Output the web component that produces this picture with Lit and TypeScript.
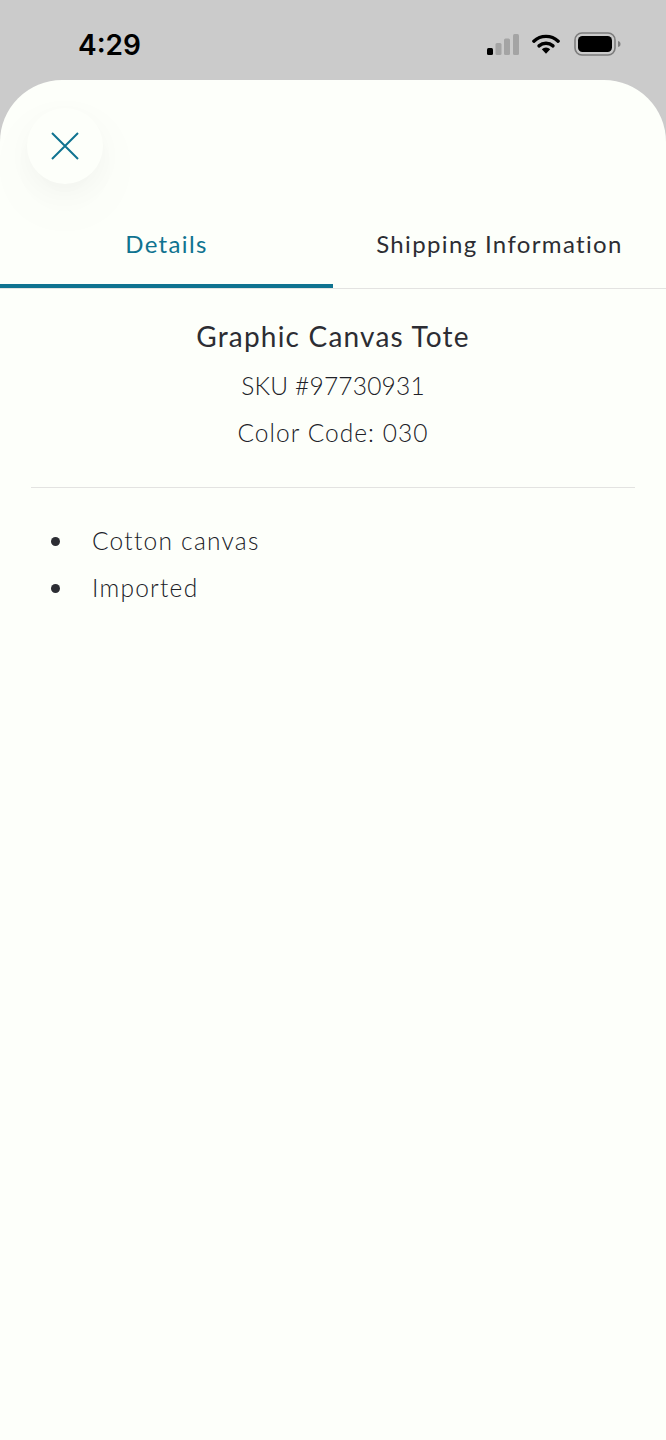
import { LitElement, html, css } from "lit";
import { customElement } from "lit/decorators.js";

@customElement("app-root")
export class AppRoot extends LitElement {
  static styles = css`
    :host { display: block; width: 666px; height: 1440px; background: #cbcbcb; overflow: hidden; font-family: Lato, "Open Sans", sans-serif; color: #2c2d33; }
    .status { height: 80px; display: flex; align-items: center; justify-content: space-between; padding: 0 44px 0 78px; box-sizing: border-box; }
    .time { font-family: Inter, "Liberation Sans", sans-serif; font-weight: 600; font-size: 28px; color: #000; line-height: 1; margin-top: 9px; }
    .icons { display: flex; align-items: center; gap: 12px; margin-top: 8px; }
    .icons svg { display: block; }
    .sheet { height: 1360px; background: #fdfffa; border-radius: 62px 62px 0 0; box-sizing: border-box; padding-top: 28px; overflow: hidden; }
    .close { width: 76px; height: 76px; margin-left: 27px; border-radius: 50%; background: #fdfffa; box-shadow: 0 10px 24px rgba(0,0,0,.03), 0 20px 70px rgba(0,0,0,.03); display: flex; align-items: center; justify-content: center; }
    .tabs { display: flex; margin-top: 26px; border-bottom: 1px solid #e3e3e1; }
    .tab { flex: 1; height: 78px; box-sizing: border-box; padding-top: 19px; text-align: center; font-size: 24px; line-height: 30px; letter-spacing: 1.35px; }
    .tab.active { color: #0f7390; border-bottom: 4px solid #0f7390; }
    .info { text-align: center; padding: 30px 31px 0; }
    .title { font-size: 28px; line-height: 35px; letter-spacing: 1.2px; }
    .line { font-size: 24.5px; line-height: 30px; letter-spacing: 1.05px; font-weight: 300; color: #202127; margin-top: 17px; }
    .line.first { margin-top: 17px; letter-spacing: .2px; }
    .rule { height: 1px; background: #e3e3e1; margin: 39px 31px 0; }
    ul { list-style: none; margin: 0; padding: 38px 0 0 51px; }
    li { display: flex; align-items: center; font-size: 24.5px; line-height: 30px; letter-spacing: 1.25px; font-weight: 300; color: #202127; margin-bottom: 17px; }
    .dot { width: 9px; height: 9px; border-radius: 50%; background: #2c2d33; margin-right: 32px; }
  `;

  render() {
    return html`
      <div class="status">
        <div class="time">4:29</div>
        <div class="icons">
          <svg width="34" height="22" viewBox="0 0 34 22">
            <rect x="1" y="15" width="6" height="7" rx="1.5" fill="#000"/>
            <rect x="9.5" y="10" width="6" height="12" rx="1.5" fill="#a4a4a4"/>
            <rect x="18" y="5.5" width="6" height="16.5" rx="1.5" fill="#a4a4a4"/>
            <rect x="27" y="1" width="6" height="21" rx="1.5" fill="#a4a4a4"/>
          </svg>
          <svg width="28" height="22" viewBox="0 0 30 22">
            <path d="M2 8 A19 19 0 0 1 28 8" fill="none" stroke="#000" stroke-width="3.6" stroke-linecap="round"/>
            <path d="M7.5 13 A11.5 11.5 0 0 1 22.5 13" fill="none" stroke="#000" stroke-width="3.6" stroke-linecap="round"/>
            <path d="M10.5 16.5 A6.5 6.5 0 0 1 19.5 16.5 L15 21.5 Z" fill="#000"/>
          </svg>
          <svg width="48" height="24" viewBox="0 0 48 24" style="margin-left:2px">
            <rect x="1" y="1" width="40" height="22" rx="7" fill="none" stroke="#7d7d7d" stroke-width="1.6"/>
            <rect x="4" y="4" width="34" height="16" rx="4.5" fill="#000"/>
            <path d="M44 9 C46 9.5 46.5 10.5 46.5 12 C46.5 13.5 46 14.5 44 15 Z" fill="#7d7d7d"/>
          </svg>
        </div>
      </div>
      <div class="sheet">
        <div class="close">
          <svg width="30" height="30" viewBox="0 0 30 30">
            <path d="M2 2 L28 28 M28 2 L2 28" stroke="#0f7390" stroke-width="2" fill="none"/>
          </svg>
        </div>
        <div class="tabs">
          <div class="tab active">Details</div>
          <div class="tab">Shipping Information</div>
        </div>
        <div class="info">
          <div class="title">Graphic Canvas Tote</div>
          <div class="line first">SKU #97730931</div>
          <div class="line">Color Code: 030</div>
        </div>
        <div class="rule"></div>
        <ul>
          <li><span class="dot"></span>Cotton canvas</li>
          <li><span class="dot"></span>Imported</li>
        </ul>
      </div>
    `;
  }
}
